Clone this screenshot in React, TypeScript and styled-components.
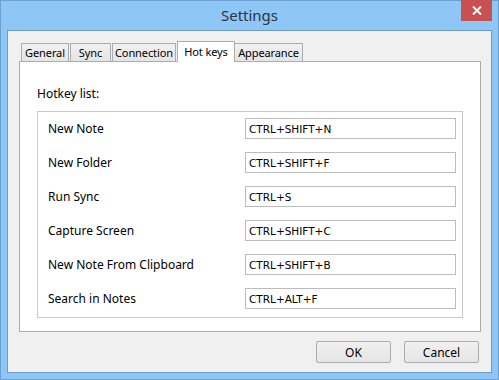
import React from "react";
import styled, { createGlobalStyle } from "styled-components";

const Global = createGlobalStyle`
  html, body { margin: 0; padding: 0; background: #8ec7f6; }
  * { box-sizing: border-box; }
`;

const Window = styled.div`
  width: 499px;
  height: 380px;
  background: #8ec7f6;
  border: 1px solid #6fa0d2;
  display: flex;
  flex-direction: column;
  font-family: "Noto Sans", "Open Sans", sans-serif;
  color: #000;
`;

const TitleBar = styled.div`
  height: 29px;
  position: relative;
  display: flex;
  align-items: center;
  justify-content: center;
  font-size: 15px;
  color: #2b3440;
  padding-bottom: 2px;
`;

const CloseButton = styled.div`
  position: absolute;
  top: -1px;
  right: 6px;
  width: 31px;
  height: 21px;
  background: #c75050;
  display: flex;
  align-items: center;
  justify-content: center;
`;

const Client = styled.div`
  flex: 1;
  margin: 0 6px 6px 6px;
  border: 1px solid #6e9cc9;
  background: #f0f0f0;
  display: flex;
  flex-direction: column;
  padding: 10px 0 0 11px;
`;

const TabRow = styled.div`
  display: flex;
  align-items: flex-end;
  height: 21px;
  padding-left: 2px;
  position: relative;
  z-index: 1;
  margin-bottom: -1px;
`;

const Tab = styled.div<{ $active?: boolean; $w: number }>`
  width: ${(p) => p.$w}px;
  height: ${(p) => (p.$active ? "21px" : "19px")};
  margin-right: ${(p) => (p.$active ? "-1px" : "1px")};
  border: 1px solid #acacac;
  border-bottom: ${(p) => (p.$active ? "none" : "1px solid #acacac")};
  background: ${(p) =>
    p.$active ? "#ffffff" : "linear-gradient(#f0f0f0, #e5e5e5)"};
  font-size: 11px;
  letter-spacing: -0.1px;
  display: flex;
  align-items: center;
  justify-content: center;
  padding-bottom: ${(p) => (p.$active ? "2px" : "0")};
  position: relative;
  z-index: ${(p) => (p.$active ? 2 : 0)};
  color: #000;
`;

const Panel = styled.div`
  width: 462px;
  height: 271px;
  background: #fff;
  border: 1px solid #acacac;
  padding: 24px 17px 0 17px;
`;

const Caption = styled.div`
  font-size: 12px;
  height: 25px;
  line-height: 16px;
`;

const Group = styled.div`
  width: 426px;
  height: 207px;
  border: 1px solid #c9c9c9;
  padding: 6px 6px 0 10px;
  display: flex;
  flex-direction: column;
  gap: 13px;
`;

const Row = styled.div`
  display: flex;
  align-items: center;
  justify-content: space-between;
  height: 21px;
`;

const Label = styled.div`
  font-size: 12px;
  color: #000;
`;

const KeyBox = styled.div`
  width: 211px;
  height: 21px;
  border: 1px solid #bcbcbc;
  font-family: "DejaVu Sans", sans-serif;
  font-size: 10.5px;
  padding-left: 3px;
  display: flex;
  align-items: center;
  color: #000;
`;

const Footer = styled.div`
  display: flex;
  justify-content: flex-end;
  gap: 13px;
  padding: 9px 12px 0 0;
`;

const Button = styled.div`
  width: 75px;
  height: 22px;
  border: 1px solid #acacac;
  border-radius: 2px;
  background: linear-gradient(#f0f0f0, #e5e5e5);
  font-size: 12px;
  display: flex;
  align-items: center;
  justify-content: center;
`;

const tabs: { label: string; w: number; active?: boolean }[] = [
  { label: "General", w: 48 },
  { label: "Sync", w: 41 },
  { label: "Connection", w: 64 },
  { label: "Hot keys", w: 58, active: true },
  { label: "Appearance", w: 69 },
];

const hotkeys: [string, string][] = [
  ["New Note", "CTRL+SHIFT+N"],
  ["New Folder", "CTRL+SHIFT+F"],
  ["Run Sync", "CTRL+S"],
  ["Capture Screen", "CTRL+SHIFT+C"],
  ["New Note From Clipboard", "CTRL+SHIFT+B"],
  ["Search in Notes", "CTRL+ALT+F"],
];

export default function App() {
  return (
    <>
      <Global />
      <Window>
        <TitleBar>
          Settings
          <CloseButton>
            <svg width="10" height="9" viewBox="0 0 10 9">
              <path d="M1 0.5 L9 8.5 M9 0.5 L1 8.5" stroke="#fff" strokeWidth="2" />
            </svg>
          </CloseButton>
        </TitleBar>
        <Client>
          <TabRow>
            {tabs.map((t) => (
              <Tab key={t.label} $w={t.w} $active={t.active}>
                {t.label}
              </Tab>
            ))}
          </TabRow>
          <Panel>
            <Caption>Hotkey list:</Caption>
            <Group>
              {hotkeys.map(([name, key]) => (
                <Row key={name}>
                  <Label>{name}</Label>
                  <KeyBox>{key}</KeyBox>
                </Row>
              ))}
            </Group>
          </Panel>
          <Footer>
            <Button>OK</Button>
            <Button>Cancel</Button>
          </Footer>
        </Client>
      </Window>
    </>
  );
}
